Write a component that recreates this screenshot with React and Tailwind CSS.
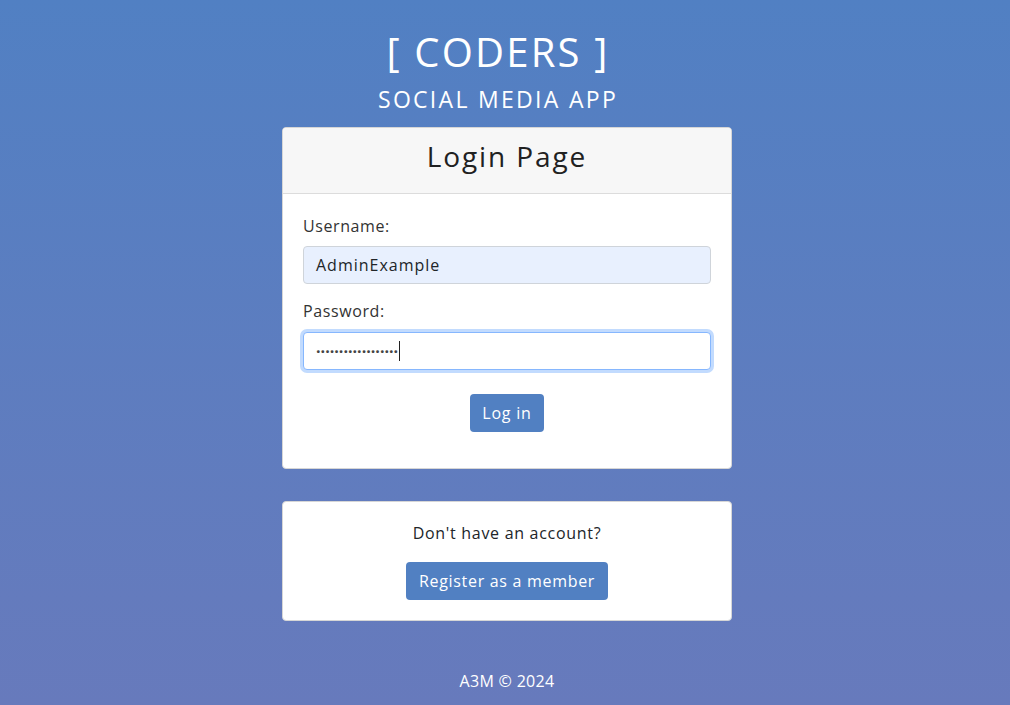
export default function App() {
  const font = { fontFamily: '"Open Sans", "Liberation Sans", sans-serif' };
  return (
    <div
      className="w-full h-[705px] flex flex-col items-center pl-[4px] bg-gradient-to-b from-[#5180c3] to-[#677abc] text-[#212529]"
      style={font}
    >
      <div className="pt-[26px] text-white text-center flex flex-col items-center mr-[18px]">
        <div className="text-[40px] leading-[52px] tracking-[2.2px]">[ CODERS ]</div>
        <div className="text-[23px] leading-[30px] mt-[6px] tracking-[2.3px]">SOCIAL MEDIA APP</div>
      </div>

      <div className="mt-[13px] w-[450px] bg-white border border-[#d6d6d6] rounded-[4px] overflow-hidden">
        <div className="h-[66px] bg-[#f7f7f7] border-b border-[#dcdcdc] flex items-center justify-center pb-[9px]">
          <div className="text-[28px] leading-[34px] text-[#212121] tracking-[1.9px]">Login Page</div>
        </div>
        <div className="px-[20px] pt-[20px] pb-[36px] tracking-[0.6px]">
          <div className="text-[16px] leading-[24px] text-[#333]">Username:</div>
          <div className="mt-[8px] h-[38px] rounded-[4px] border border-[#cfd4da] bg-[#e8f0fe] px-[12px] flex items-center text-[16px] text-[#212529] tracking-[1px]">
            AdminExample
          </div>
          <div className="mt-[15px] text-[16px] leading-[24px] text-[#333]">Password:</div>
          <div className="mt-[9px] h-[38px] rounded-[4px] border border-[#86b7fe] ring-[3px] ring-[#c2dbfe] bg-white px-[12px] flex items-center text-[16px] text-[#444]">
            <span className="tracking-[0px] font-bold">··················</span>
            <span className="inline-block w-[1px] h-[20px] bg-[#222] ml-[1px]"></span>
          </div>
          <div className="mt-[24px] flex justify-center">
            <button className="h-[38px] px-[12px] rounded-[4px] bg-[#5180c2] text-white text-[16px] tracking-[0.8px]">
              Log in
            </button>
          </div>
        </div>
      </div>

      <div className="mt-[32px] w-[450px] bg-white border border-[#d6d6d6] rounded-[4px] px-[20px] pt-[19px] pb-[20px] flex flex-col items-center tracking-[0.7px]">
        <div className="text-[16px] leading-[24px] text-[#212529]">Don't have an account?</div>
        <button className="mt-[17px] h-[38px] px-[13px] rounded-[4px] bg-[#5180c2] text-white text-[16px]">
          Register as a member
        </button>
      </div>

      <div className="mt-[48px] text-white text-[16px] leading-[24px] tracking-[0.3px]">A3M © 2024</div>
    </div>
  );
}
